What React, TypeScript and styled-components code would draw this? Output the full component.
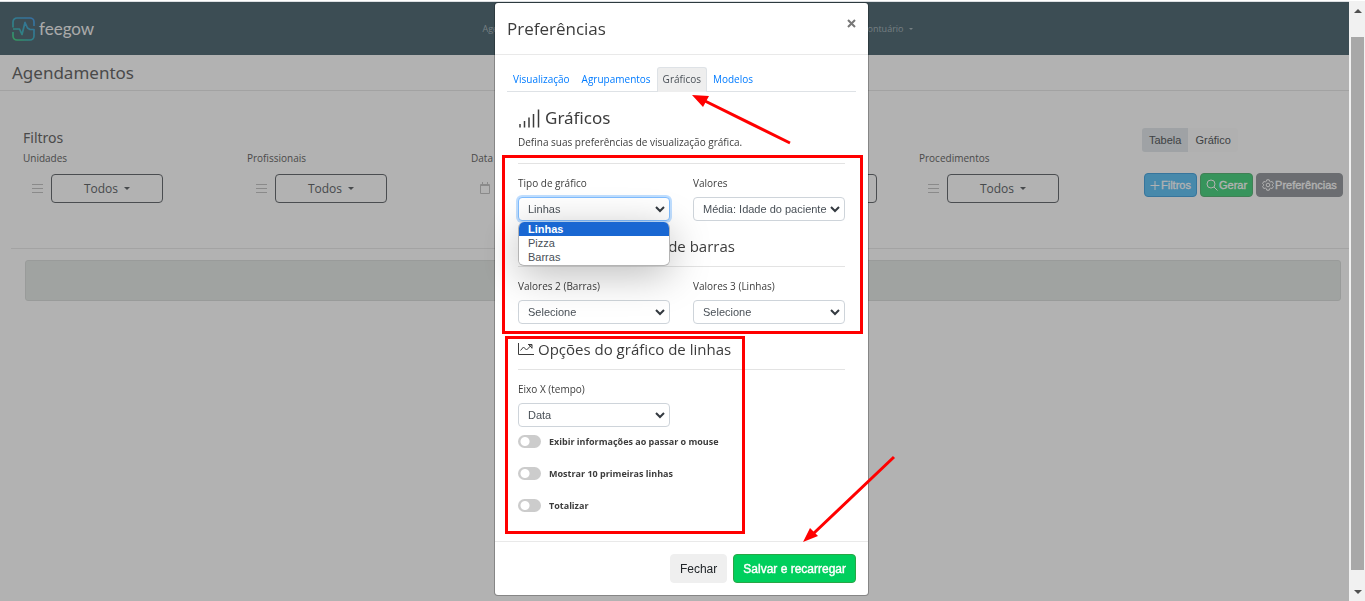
import React from "react";
import styled, { createGlobalStyle, css } from "styled-components";

const GlobalStyle = createGlobalStyle`
  *, *::before, *::after { box-sizing: border-box; }
  body {
    margin: 0;
    background: #fff;
    color: #666;
    font-family: "Open Sans", "Noto Sans", sans-serif;
    font-size: 11px;
    overflow: hidden;
  }
  h1, h2, h3, p, ul { margin: 0; padding: 0; font-weight: 400; }
  a { text-decoration: none; }
  button, input, select { font: inherit; }
`;

const arial = `"Liberation Sans", Arial, sans-serif`;
const heading = `"Noto Sans", "Open Sans", sans-serif`;

/* ---------- page ---------- */

const Frame = styled.div`
  display: grid;
  grid-template-columns: minmax(0, 1fr) 16px;
  min-height: 100vh;
  border-top: 1px solid #fff;
`;

const Page = styled.div`
  border-top: 1px solid #dcdfe2;
  overflow: hidden;
`;

const TopBar = styled.header`
  display: flex;
  align-items: center;
  height: 53px;
  padding: 0 12px;
  background: #566f79;
`;

const Brand = styled.a`
  display: flex;
  flex: 1;
  align-items: center;
  gap: 4px;
  color: #f4f4f4;
  font-family: Lato, sans-serif;
  font-size: 17px;
  line-height: 24px;
`;

const Nav = styled.nav`
  display: flex;
  justify-content: space-between;
  width: 430px;
  margin-left: 46px;
`;

const NavLink = styled.a`
  display: flex;
  align-items: center;
  gap: 5px;
  color: #a9b6bb;
  font-size: 9px;
`;

const NavSpacer = styled.div`
  flex: 1;
`;

const Caret = styled.span<{ $small?: boolean }>`
  border: solid transparent;
  border-width: ${(p) => (p.$small ? "2px 2px 0" : "3px 3px 0")};
  border-top-color: currentColor;
`;

const PageTitle = styled.h1`
  padding: 0 12px;
  border-bottom: 1px solid #e8e8e8;
  color: #6b6b6b;
  font-family: ${heading};
  font-size: 17px;
  line-height: 35px;
`;

const Filters = styled.form`
  display: grid;
  grid-template-columns: repeat(6, minmax(0, 1fr));
  margin: 37px -6px 0 11px;
  padding-bottom: 45px;
  border-bottom: 1px solid #eaeaea;
`;

const FiltersTitle = styled.h2`
  grid-column: 1 / 6;
  padding: 0 12px;
  color: #6b6b6b;
  font-family: ${heading};
  font-size: 14px;
  line-height: 20px;
`;

const Field = styled.div<{ $span?: number }>`
  grid-column: span ${(p) => p.$span ?? 1};
  padding: 0 12px;
`;

const FieldLabel = styled.label`
  display: block;
  color: #6b6b6b;
  font-size: 10px;
  line-height: 20px;
`;

const FieldRow = styled.div`
  display: flex;
  align-items: center;
  margin-top: 6px;
  padding-left: 8px;
  color: #c6c6c6;
`;

const AllButton = styled.button`
  display: flex;
  align-items: center;
  justify-content: center;
  gap: 6px;
  width: 112px;
  height: 29px;
  margin-left: 8px;
  background: transparent;
  border: 1px solid #6b6f73;
  border-radius: 4px;
  color: #666a6e;
  font-size: 12px;
  line-height: 24px;
`;

const DateInput = styled.input`
  flex: 1;
  min-width: 0;
  height: 29px;
  margin-left: 8px;
  background: transparent;
  border: 1px solid #6b6f73;
  border-radius: 4px;

  &:last-child { margin-right: 18px; }
`;

const Toggle = styled.div`
  display: flex;
  grid-column: 6;
  margin: 0 0 -4px 11px;
`;

const ToggleButton = styled.button<{ $active?: boolean }>`
  height: 24px;
  padding: 0 7px;
  border: 0;
  border-radius: ${(p) => (p.$active ? "3px 0 0 3px" : "0 3px 3px 0")};
  background: ${(p) => (p.$active ? "#e4e9ec" : "#fdfdfd")};
  color: #5a5e62;
  font-family: ${arial};
  font-size: 11px;
`;

const Actions = styled.div`
  display: flex;
  align-items: flex-end;
  gap: 3px;
  padding: 0 0 6px 13px;
`;

const ActionButton = styled.button<{ $bg: string; $edge: string }>`
  display: flex;
  align-items: center;
  justify-content: center;
  gap: 1px;
  height: 24px;
  padding: 0 5px;
  border: 1px solid ${(p) => p.$edge};
  border-radius: 4px;
  background: ${(p) => p.$bg};
  color: #fff;
  font-family: ${arial};
  font-size: 11px;
  white-space: nowrap;
  -webkit-text-stroke: 0.3px #fff;
`;

const EmptyPanel = styled.section`
  height: 41px;
  margin: 11px 8px 0 25px;
  border: 1px solid #dcdfdd;
  border-radius: 3px;
  background: #e6eae7;
`;

const ScrollTrack = styled.div`
  display: flex;
  flex-direction: column;
  align-items: center;
  justify-content: space-between;
  padding: 8px 1px 7px 2px;
  background: #f1f1f1;
  color: #505050;
`;

const ScrollThumb = styled.div`
  flex: 1;
  width: 100%;
  margin: 24px 0 20px;
  background: #a8a8a8;
`;

const ScrollArrow = styled.span<{ $up?: boolean }>`
  border: 4px solid transparent;
  ${(p) =>
    p.$up
      ? css`border-top-width: 0; border-bottom-color: currentColor;`
      : css`border-bottom-width: 0; border-top-color: currentColor;`}
`;

/* ---------- modal ---------- */

const Backdrop = styled.div`
  position: fixed;
  inset: 2px 16px 0 0;
  background: rgba(0, 0, 0, 0.3);
`;

const ModalLayer = styled.div`
  position: fixed;
  inset: 0;
  display: flex;
  align-items: flex-start;
  justify-content: center;
  padding: 3px 2px 0 0;
`;

const Dialog = styled.section`
  position: relative;
  width: 373px;
  background: #fff;
  border-radius: 3px;
  box-shadow: 0 0 0 1px rgba(0, 0, 0, 0.25);
  color: #3c3c3c;
`;

const DialogHeader = styled.header`
  display: flex;
  align-items: center;
  justify-content: space-between;
  height: 52px;
  padding: 0 12px;
  border-bottom: 1px solid #e9e9e9;
`;

const DialogTitle = styled.h2`
  font-size: 17px;
  line-height: 24px;
`;

const CloseButton = styled.button`
  display: flex;
  padding: 0;
  margin-bottom: 10px;
  border: 0;
  background: none;
  color: #777;
`;

const Tabs = styled.nav`
  display: flex;
  margin: 12px 12px 0;
  border-bottom: 1px solid #dee2e6;
`;

const Tab = styled.a<{ $active?: boolean }>`
  height: 25px;
  margin-bottom: -1px;
  padding: 0 5px;
  border: 1px solid transparent;
  border-bottom: 0;
  border-radius: 3px 3px 0 0;
  color: #007bff;
  font-size: 10px;
  line-height: 22px;
  ${(p) =>
    p.$active &&
    css`
      background: #eee;
      border-color: #dee2e6;
      color: #495057;
    `}
`;

const DialogBody = styled.div`
  padding: 14px 23px 0;
`;

const SectionTitle = styled.h3<{ $large?: boolean }>`
  display: flex;
  align-items: center;
  gap: ${(p) => (p.$large ? 5 : 4)}px;
  font-family: ${(p) => (p.$large ? heading : "inherit")};
  font-size: ${(p) => (p.$large ? 17 : 15)}px;
  line-height: 24px;
`;

const Hint = styled.p`
  padding-top: 2px;
  font-size: 10px;
  line-height: 20px;
`;

const Divider = styled.hr<{ $top?: number }>`
  height: 1px;
  margin: ${(p) => p.$top ?? 8}px 0 10px;
  border: 0;
  background: #e3e3e3;
`;

const SelectRow = styled.div`
  display: grid;
  grid-template-columns: repeat(2, minmax(0, 1fr));
  gap: 23px;
`;

const SelectField = styled.div`
  position: relative;
`;

const SelectLabel = styled.label`
  display: block;
  margin-bottom: 4px;
  font-size: 10px;
  line-height: 19px;
`;

const SelectBox = styled.div`
  position: relative;
  display: flex;
  align-items: center;

  svg {
    position: absolute;
    right: 5px;
    pointer-events: none;
  }
`;

const Select = styled.select<{ $focused?: boolean }>`
  appearance: none;
  width: 100%;
  height: 24px;
  padding: 0 16px 0 9px;
  border: 1px solid ${(p) => (p.$focused ? "#80bdff" : "#ced4da")};
  border-radius: 4px;
  background: #fff;
  color: #495057;
  font-family: ${arial};
  font-size: 11px;
  outline: none;
  ${(p) => p.$focused && css`box-shadow: 0 0 0 2px rgba(0, 123, 255, 0.25);`}
`;

const OptionList = styled.ul`
  position: absolute;
  z-index: 1;
  top: 48px;
  left: 0;
  right: 0;
  overflow: hidden;
  padding-bottom: 1px;
  border: 1px solid #b4b4b4;
  border-top: 0;
  border-radius: 6px;
  background: #fff;
  box-shadow: 0 8px 40px rgba(0, 0, 0, 0.28);
  list-style: none;
`;

const Option = styled.li<{ $selected?: boolean }>`
  padding: 0 9px;
  background: ${(p) => (p.$selected ? "#1967d2" : "#fff")};
  color: ${(p) => (p.$selected ? "#fff" : "#495057")};
  font-family: ${arial};
  font-size: 11px;
  font-weight: ${(p) => (p.$selected ? 700 : 400)};
  line-height: 14px;
`;

const Group = styled.section`
  padding-top: 13px;
`;

const SwitchRow = styled.label`
  display: flex;
  align-items: center;
  gap: 8px;
  height: 28px;
  margin-bottom: 4px;
  font-size: 9px;
  font-weight: 700;
`;

const Switch = styled.input`
  appearance: none;
  width: 23px;
  height: 13px;
  margin: 0;
  border-radius: 7px;
  background: radial-gradient(circle at 7px 50%, #fff 4px, transparent 5px) #ccc;
`;

const SwitchList = styled.div`
  padding-bottom: 18px;
`;

const DialogFooter = styled.footer`
  display: flex;
  justify-content: flex-end;
  gap: 6px;
  padding: 12px;
  border-top: 1px solid #e9e9e9;
`;

const FooterButton = styled.button<{ $primary?: boolean }>`
  height: 29px;
  padding: 0 9px;
  border: 1px solid ${(p) => (p.$primary ? "#28a745" : "#efefef")};
  border-radius: 4px;
  background: ${(p) => (p.$primary ? "#00cf5d" : "#efefef")};
  color: ${(p) => (p.$primary ? "#fff" : "#212529")};
  font-family: ${arial};
  font-size: 12px;
  -webkit-text-stroke: ${(p) => (p.$primary ? "0.4px #fff" : "0")};
`;

/* ---------- red markers drawn over the dialog ---------- */

const Marks = styled.svg`
  position: absolute;
  z-index: 2;
  top: 0;
  left: 0;
  overflow: visible;
  pointer-events: none;
`;

/* ---------- drawings ---------- */

const Logo = () => (
  <svg width="23" height="24" viewBox="0 0 23 24" fill="none">
    <defs>
      <linearGradient id="brand" x1="0" y1="24" x2="20" y2="0" gradientUnits="userSpaceOnUse">
        <stop offset="0" stopColor="#4fe07c" />
        <stop offset="0.4" stopColor="#45b8c0" />
        <stop offset="1" stopColor="#4f9fe8" />
      </linearGradient>
    </defs>
    <path
      d="M1 10.500V5a4 4 0 0 1 4-4h13a4 4 0 0 1 4 4v4M1 15v4a4 4 0 0 0 4 4h13a4 4 0 0 0 4-4v-6.500h-4L15.500 11l-2.500-5.500-3 12L7.500 12H1"
      stroke="url(#brand)"
      strokeWidth="1.700"
      strokeLinejoin="round"
    />
  </svg>
);

const ListIcon = () => (
  <svg width="12" height="11" viewBox="0 0 12 11" stroke="currentColor">
    <path d="M1 1.500h11M1 5.500h11M1 9.500h11" />
  </svg>
);

const CalendarIcon = () => (
  <svg width="12" height="13" viewBox="0 0 12 13" fill="none" stroke="currentColor">
    <path d="M1 3.500h10M1.500 2.500h9v9h-9zM3.500 0v2.500M8.500 0v2.500" />
  </svg>
);

const PlusIcon = () => (
  <svg width="10" height="11" viewBox="0 0 10 11" stroke="currentColor">
    <path d="M5 1v9M.5 5.500h9" />
  </svg>
);

const SearchIcon = () => (
  <svg width="12" height="12" viewBox="0 0 12 12" fill="none" stroke="currentColor">
    <circle cx="5" cy="5" r="4" />
    <path d="M8 8l3.500 3.500" />
  </svg>
);

const GearIcon = () => (
  <svg width="12" height="12" viewBox="0 0 12 12" fill="none" stroke="currentColor" strokeLinejoin="round">
    <path d="M4.800.8h2.400l.4 1.500 1.100.6 1.500-.4 1.200 2.100L10.300 5.700v.6l1.100 1.100-1.200 2.100-1.500-.4-1.100.6-.4 1.500H4.800l-.4-1.500-1.100-.6-1.500.4L.6 7.400l1.100-1.100v-.6L.6 4.600l1.200-2.100 1.500.4 1.100-.6z" />
    <circle cx="6" cy="6" r="1.800" />
  </svg>
);

const CloseIcon = () => (
  <svg width="9" height="9" viewBox="0 0 9 9" stroke="currentColor" strokeWidth="2">
    <path d="M1 1l7 7M8 1L1 8" />
  </svg>
);

const SignalIcon = () => (
  <svg width="22" height="19" viewBox="0 0 22 19" stroke="#3c3c3c" strokeWidth="1.500">
    <path d="M2 15v3.500M6.500 12v6.500M11 8.500v10M15.500 5v13.500M20.500 .5v18" />
  </svg>
);

const BarsIcon = () => (
  <svg width="16" height="12" viewBox="0 0 16 12" fill="none" stroke="#3c3c3c">
    <path d="M.5 0v11.500H16M4.500 6v3M7.500 3v6M10.500 5v4M13.500 1v8" />
  </svg>
);

const TrendIcon = () => (
  <svg width="16" height="12" viewBox="0 0 16 12" fill="none" stroke="#3c3c3c">
    <path d="M.5 0v11.500H16M2.500 7.500L5.500 4l3 3 5-5M10 1.500h4V5.500M10.500 1.500l3.500 3.500" />
  </svg>
);

const ChevronIcon = () => (
  <svg width="10" height="7" viewBox="0 0 10 7" fill="none" stroke="#343a40" strokeWidth="2">
    <path d="M1 1l4 4 4-4" />
  </svg>
);

/* ---------- composed parts ---------- */

function AllFilter({ id, label }: { id: string; label: string }) {
  return (
    <Field>
      <FieldLabel htmlFor={id}>{label}</FieldLabel>
      <FieldRow>
        <ListIcon />
        <AllButton type="button" id={id}>
          Todos <Caret />
        </AllButton>
      </FieldRow>
    </Field>
  );
}

type SelectProps = {
  id: string;
  label: string;
  options: string[];
  open?: boolean;
};

function LabeledSelect({ id, label, options, open }: SelectProps) {
  return (
    <SelectField>
      <SelectLabel htmlFor={id}>{label}</SelectLabel>
      <SelectBox>
        <Select id={id} $focused={open} defaultValue={options[0]}>
          {options.map((o) => (
            <option key={o}>{o}</option>
          ))}
        </Select>
        <ChevronIcon />
      </SelectBox>
      {open && (
        <OptionList role="listbox" aria-label={label}>
          {options.map((o, i) => (
            <Option key={o} role="option" aria-selected={i === 0} $selected={i === 0}>
              {o}
            </Option>
          ))}
        </OptionList>
      )}
    </SelectField>
  );
}

const switches = ["Exibir informações ao passar o mouse", "Mostrar 10 primeiras linhas", "Totalizar"];

export default function App() {
  return (
    <>
      <GlobalStyle />
      <Frame>
        <Page>
          <TopBar>
            <Brand href="#">
              <Logo />
              feegow
            </Brand>
            <Nav>
              <NavLink href="#">Agenda</NavLink>
              <NavLink href="#">
                Prontuário <Caret $small />
              </NavLink>
            </Nav>
            <NavSpacer />
          </TopBar>
          <PageTitle>Agendamentos</PageTitle>
          <Filters>
            <FiltersTitle>Filtros</FiltersTitle>
            <Toggle>
              <ToggleButton type="button" $active>Tabela</ToggleButton>
              <ToggleButton type="button">Gráfico</ToggleButton>
            </Toggle>
            <AllFilter id="unidades" label="Unidades" />
            <AllFilter id="profissionais" label="Profissionais" />
            <Field $span={2}>
              <FieldLabel htmlFor="data">Data</FieldLabel>
              <FieldRow>
                <CalendarIcon />
                <DateInput id="data" type="text" />
                <DateInput aria-label="Data final" type="text" />
              </FieldRow>
            </Field>
            <AllFilter id="procedimentos" label="Procedimentos" />
            <Actions>
              <ActionButton type="button" $bg="#66c4f5" $edge="#4fa8e0">
                <PlusIcon />
                Filtros
              </ActionButton>
              <ActionButton type="button" $bg="#4fd585" $edge="#5cb87a">
                <SearchIcon />
                Gerar
              </ActionButton>
              <ActionButton type="button" $bg="#9a9da2" $edge="#9a9da2">
                <GearIcon />
                Preferências
              </ActionButton>
            </Actions>
          </Filters>
          <EmptyPanel />
        </Page>
        <ScrollTrack>
          <ScrollArrow $up />
          <ScrollThumb />
          <ScrollArrow />
        </ScrollTrack>
      </Frame>

      <Backdrop />
      <ModalLayer>
        <Dialog role="dialog" aria-labelledby="dialog-title">
          <DialogHeader>
            <DialogTitle id="dialog-title">Preferências</DialogTitle>
            <CloseButton type="button" aria-label="Fechar janela">
              <CloseIcon />
            </CloseButton>
          </DialogHeader>
          <Tabs>
            <Tab href="#">Visualização</Tab>
            <Tab href="#">Agrupamentos</Tab>
            <Tab href="#" $active>Gráficos</Tab>
            <Tab href="#">Modelos</Tab>
          </Tabs>
          <DialogBody>
            <SectionTitle $large>
              <SignalIcon />
              Gráficos
            </SectionTitle>
            <Hint>Defina suas preferências de visualização gráfica.</Hint>
            <Divider $top={11} />
            <SelectRow>
              <LabeledSelect id="tipo" label="Tipo de gráfico" options={["Linhas", "Pizza", "Barras"]} open />
              <LabeledSelect id="valores" label="Valores" options={["Média: Idade do paciente"]} />
            </SelectRow>
            <Group>
              <SectionTitle>
                <BarsIcon />
                Opções do gráfico de barras
              </SectionTitle>
              <Divider />
              <SelectRow>
                <LabeledSelect id="valores2" label="Valores 2 (Barras)" options={["Selecione"]} />
                <LabeledSelect id="valores3" label="Valores 3 (Linhas)" options={["Selecione"]} />
              </SelectRow>
            </Group>
            <Group>
              <SectionTitle>
                <TrendIcon />
                Opções do gráfico de linhas
              </SectionTitle>
              <Divider />
              <SelectRow>
                <LabeledSelect id="eixo" label="Eixo X (tempo)" options={["Data"]} />
              </SelectRow>
            </Group>
            <SwitchList>
              {switches.map((text) => (
                <SwitchRow key={text}>
                  <Switch type="checkbox" role="switch" />
                  {text}
                </SwitchRow>
              ))}
            </SwitchList>
          </DialogBody>
          <DialogFooter>
            <FooterButton type="button">Fechar</FooterButton>
            <FooterButton type="button" $primary>Salvar e recarregar</FooterButton>
          </DialogFooter>
          <Marks width="373" height="593" viewBox="0 0 373 593" aria-hidden="true">
            <g fill="none" stroke="#f00" strokeWidth="3">
              <rect x="8.500" y="153.500" width="358" height="176" />
              <rect x="11.500" y="334.500" width="237" height="195" />
              <path d="M295 140L208 97M399 454L319 530" />
            </g>
            <path d="M197 92l17 1-6 11zM308 539l7-14 8 8z" fill="#f00" />
          </Marks>
        </Dialog>
      </ModalLayer>
    </>
  );
}
